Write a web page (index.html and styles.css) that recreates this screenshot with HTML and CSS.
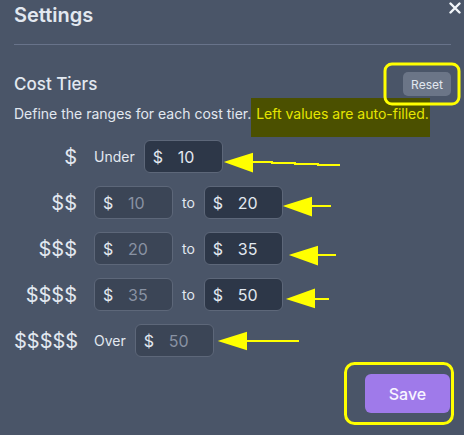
FILE: index.html
```html
<!DOCTYPE html>
<html lang="en">
<head>
<meta charset="utf-8">
<title>Settings</title>
<link rel="stylesheet" href="styles.css">
</head>
<body>
<div class="modal">
  <header class="modal-header">
    <h1 class="modal-title">Settings</h1>
    <button class="close-btn" aria-label="Close">
      <svg width="12" height="12" viewBox="0 0 12 12"><path d="M1.5 1.5 L10.5 10.5 M10.5 1.5 L1.5 10.5" stroke="#f1f5f9" stroke-width="2.4" stroke-linecap="round"/></svg>
    </button>
  </header>
  <hr class="divider">
  <section class="section">
    <div class="section-head">
      <h2 class="section-title">Cost Tiers</h2>
      <button class="reset-btn">Reset</button>
    </div>
    <p class="desc">Define the ranges for each cost tier.<span class="hl"> Left values are auto-filled.</span></p>
    <div class="tiers">
      <div class="tier">
        <span class="tier-label">$</span>
        <span class="word">Under</span>
        <div class="field"><span class="cur">$</span><span class="val">10</span></div>
      </div>
      <div class="tier">
        <span class="tier-label">$$</span>
        <div class="field disabled"><span class="cur">$</span><span class="val">10</span></div>
        <span class="word">to</span>
        <div class="field"><span class="cur">$</span><span class="val">20</span></div>
      </div>
      <div class="tier">
        <span class="tier-label">$$$</span>
        <div class="field disabled"><span class="cur">$</span><span class="val">20</span></div>
        <span class="word">to</span>
        <div class="field"><span class="cur">$</span><span class="val">35</span></div>
      </div>
      <div class="tier">
        <span class="tier-label">$$$$</span>
        <div class="field disabled"><span class="cur">$</span><span class="val">35</span></div>
        <span class="word">to</span>
        <div class="field"><span class="cur">$</span><span class="val">50</span></div>
      </div>
      <div class="tier">
        <span class="tier-label">$$$$$</span>
        <span class="word">Over</span>
        <div class="field disabled"><span class="cur">$</span><span class="val">50</span></div>
      </div>
    </div>
  </section>
  <footer class="modal-footer">
    <button class="save-btn">Save</button>
  </footer>
</div>
<svg class="annot" width="464" height="435" viewBox="0 0 464 435">
  <g fill="none" stroke="#ffff00" stroke-width="3">
    <rect x="385" y="64" width="74" height="40" rx="7"/>
    <rect x="345.5" y="363.5" width="107" height="60" rx="9"/>
  </g>
  <g fill="#ffff00" stroke="#ffff00" stroke-width="2">
    <polygon points="227,162 252,154 252,171"/>
    <polyline fill="none" points="252,162 272,162 272,163 295,163 295,164 318,164 318,165 340,165"/>
    <polygon points="286,206 311,198 311,215"/>
    <line x1="311" y1="206" x2="331" y2="206"/>
    <polygon points="292,255 317,247 317,264"/>
    <line x1="317" y1="255" x2="336" y2="255"/>
    <polygon points="289,299 314,290 314,307"/>
    <line x1="314" y1="299" x2="329" y2="299"/>
    <polygon points="221,341 246,333 246,349"/>
    <line x1="246" y1="341" x2="299" y2="341"/>
  </g>
</svg>
</body>
</html>
```

FILE: styles.css
```css
* { box-sizing: border-box; }
html, body { margin: 0; padding: 0; }
body {
  background: #4a5568;
  color: #e2e8f0;
  font-family: Inter, "Noto Sans", "Liberation Sans", sans-serif;
  width: 464px;
  height: 435px;
  overflow: hidden;
  position: relative;
}
.modal {
  padding: 3px 13px 0 14px;
}
.modal-header {
  display: flex;
  align-items: flex-start;
  justify-content: space-between;
}
.modal-title {
  margin: 0;
  font-size: 20px;
  line-height: 24px;
  font-weight: 600;
  color: #e2e8f0;
}
.close-btn {
  position: absolute;
  top: 2px;
  right: 3px;
  background: none;
  border: 0;
  padding: 0;
  width: 12px;
  height: 12px;
  display: flex;
}
.divider {
  border: 0;
  border-top: 1px solid #68738a;
  margin: 17px 0 0 0;
}
.section-head {
  display: flex;
  align-items: center;
  justify-content: space-between;
  margin-top: 27px;
}
.section-title {
  margin: 0;
  font-size: 17px;
  line-height: 24px;
  font-weight: 500;
  color: #e2e8f0;
}
.reset-btn {
  background: #6b7587;
  color: #e2e8f0;
  border: 0;
  border-radius: 5px;
  font-family: inherit;
  font-size: 12px;
  height: 24px;
  width: 48px;
  padding: 0;
}
.desc {
  margin: 8px 0 0 0;
  font-size: 14px;
  line-height: 20px;
  color: #e2e8f0;
}
.hl {
  background: #4b5000;
  color: #e6e600;
  padding: 7px 1px 15px 1px;
}
.tiers {
  margin-top: 16px;
  display: flex;
  flex-direction: column;
  gap: 13px;
}
.tier {
  display: flex;
  align-items: center;
  gap: 9px;
  height: 33px;
}
.tier-label {
  width: 63px;
  margin-right: 8px;
  text-align: right;
  font-size: 20px;
  color: #e2e8f0;
}
.word {
  font-size: 14px;
  color: #e2e8f0;
}
.field {
  width: 79px;
  height: 33px;
  border: 1px solid #5d6779;
  border-radius: 6px;
  background: #2d3748;
  display: flex;
  align-items: center;
  padding-left: 8px;
  font-size: 16px;
  color: #e2e8f0;
}
.field.disabled {
  background: #3b4556;
}
.field.disabled .val {
  color: #8992a3;
}
.cur {
  width: 25px;
}
.modal-footer {
  display: flex;
  justify-content: flex-end;
  margin-top: 17px;
  padding-right: 1px;
}
.save-btn {
  width: 85px;
  height: 39px;
  background: #9f7aea;
  color: #f8f5ff;
  border: 0;
  border-radius: 6px;
  font-family: inherit;
  font-size: 16px;
  font-weight: 500;
}
.annot {
  position: absolute;
  left: 0;
  top: 0;
  pointer-events: none;
}
```
